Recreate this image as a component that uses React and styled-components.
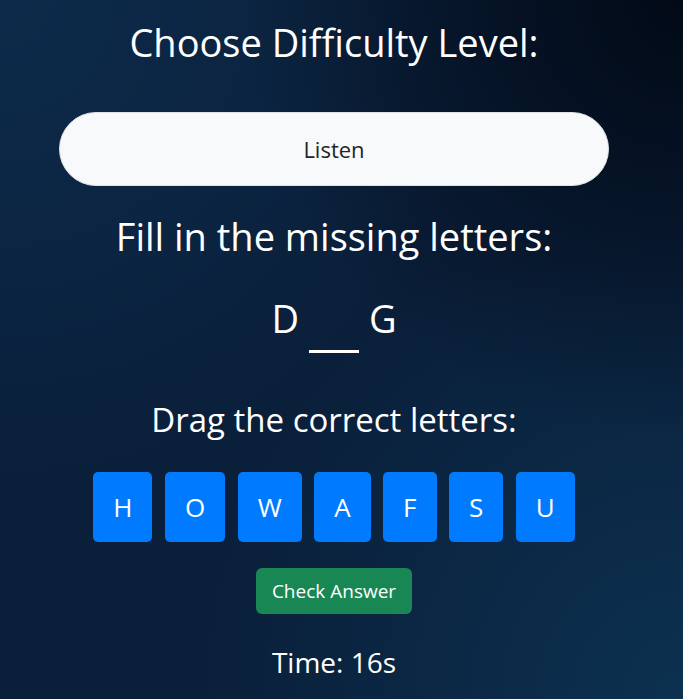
import React from "react";
import styled, { createGlobalStyle } from "styled-components";

const GlobalStyle = createGlobalStyle`
  html, body {
    margin: 0;
    padding: 0;
    height: 100%;
  }
  body {
    font-family: "Open Sans", "Noto Sans", sans-serif;
    color: #ffffff;
    background: #0a1f3a;
  }
  #root {
    min-height: 100%;
  }
`;

const Page = styled.main`
  min-height: 699px;
  box-sizing: border-box;
  padding: 0 15px 0 0;
  display: flex;
  flex-direction: column;
  align-items: center;
  background:
    radial-gradient(circle at 100% 0%, rgba(0, 6, 16, 0.85) 0%, rgba(0, 6, 16, 0) 45%),
    radial-gradient(circle at 100% 100%, #0c3150 0%, rgba(12, 49, 80, 0) 50%),
    radial-gradient(circle at 0% 0%, #0c2b4a 0%, rgba(12, 43, 74, 0) 50%),
    #0a1f3a;
`;

const Heading = styled.h2`
  margin: ${(p) => p.$top}px 0 0;
  font-size: ${(p) => p.$size}px;
  line-height: 1.2;
  font-weight: 400;
  text-align: center;
  color: #ffffff;
`;

const LevelButton = styled.button`
  margin-top: 47px;
  width: 550px;
  height: 74px;
  border-radius: 37px;
  border: 1px solid #dee2e6;
  background: #f8f9fa;
  color: #212529;
  font-family: inherit;
  font-size: 22px;
  cursor: pointer;
`;

const WordRow = styled.div`
  margin-top: 36px;
  display: flex;
  align-items: flex-end;
`;

const Letter = styled.span`
  font-size: 38px;
  line-height: 1.2;
  padding-bottom: 12px;
`;

const Slot = styled.span`
  width: 50px;
  height: 50px;
  margin: 0 10px;
  border-bottom: 3px solid #ffffff;
`;

const Tiles = styled.div`
  margin-top: 32px;
  display: flex;
  gap: 12.5px;
`;

const Tile = styled.div`
  padding: 20px;
  font-size: 26px;
  line-height: 30px;
  background: #007bff;
  color: #ffffff;
  border-radius: 5px;
  cursor: grab;
`;

const CheckButton = styled.button`
  margin-top: 26px;
  height: 46px;
  padding: 0 16px;
  border: none;
  border-radius: 6px;
  background: #198754;
  color: #ffffff;
  font-family: inherit;
  font-size: 19px;
  line-height: 30px;
  cursor: pointer;
`;

const Timer = styled.p`
  margin: 32px 0 0;
  font-size: 28px;
  line-height: 1.2;
`;

const letters = ["H", "O", "W", "A", "F", "S", "U"];

export default function App() {
  return (
    <>
      <GlobalStyle />
      <Page>
        <Heading $size={38} $top={19.5}>Choose Difficulty Level:</Heading>
        <LevelButton>Listen</LevelButton>
        <Heading $size={38} $top={28}>Fill in the missing letters:</Heading>
        <WordRow>
          <Letter>D</Letter>
          <Slot />
          <Letter>G</Letter>
        </WordRow>
        <Heading $size={33} $top={47}>Drag the correct letters:</Heading>
        <Tiles>
          {letters.map((l) => (
            <Tile key={l}>{l}</Tile>
          ))}
        </Tiles>
        <CheckButton>Check Answer</CheckButton>
        <Timer>Time: 16s</Timer>
      </Page>
    </>
  );
}
